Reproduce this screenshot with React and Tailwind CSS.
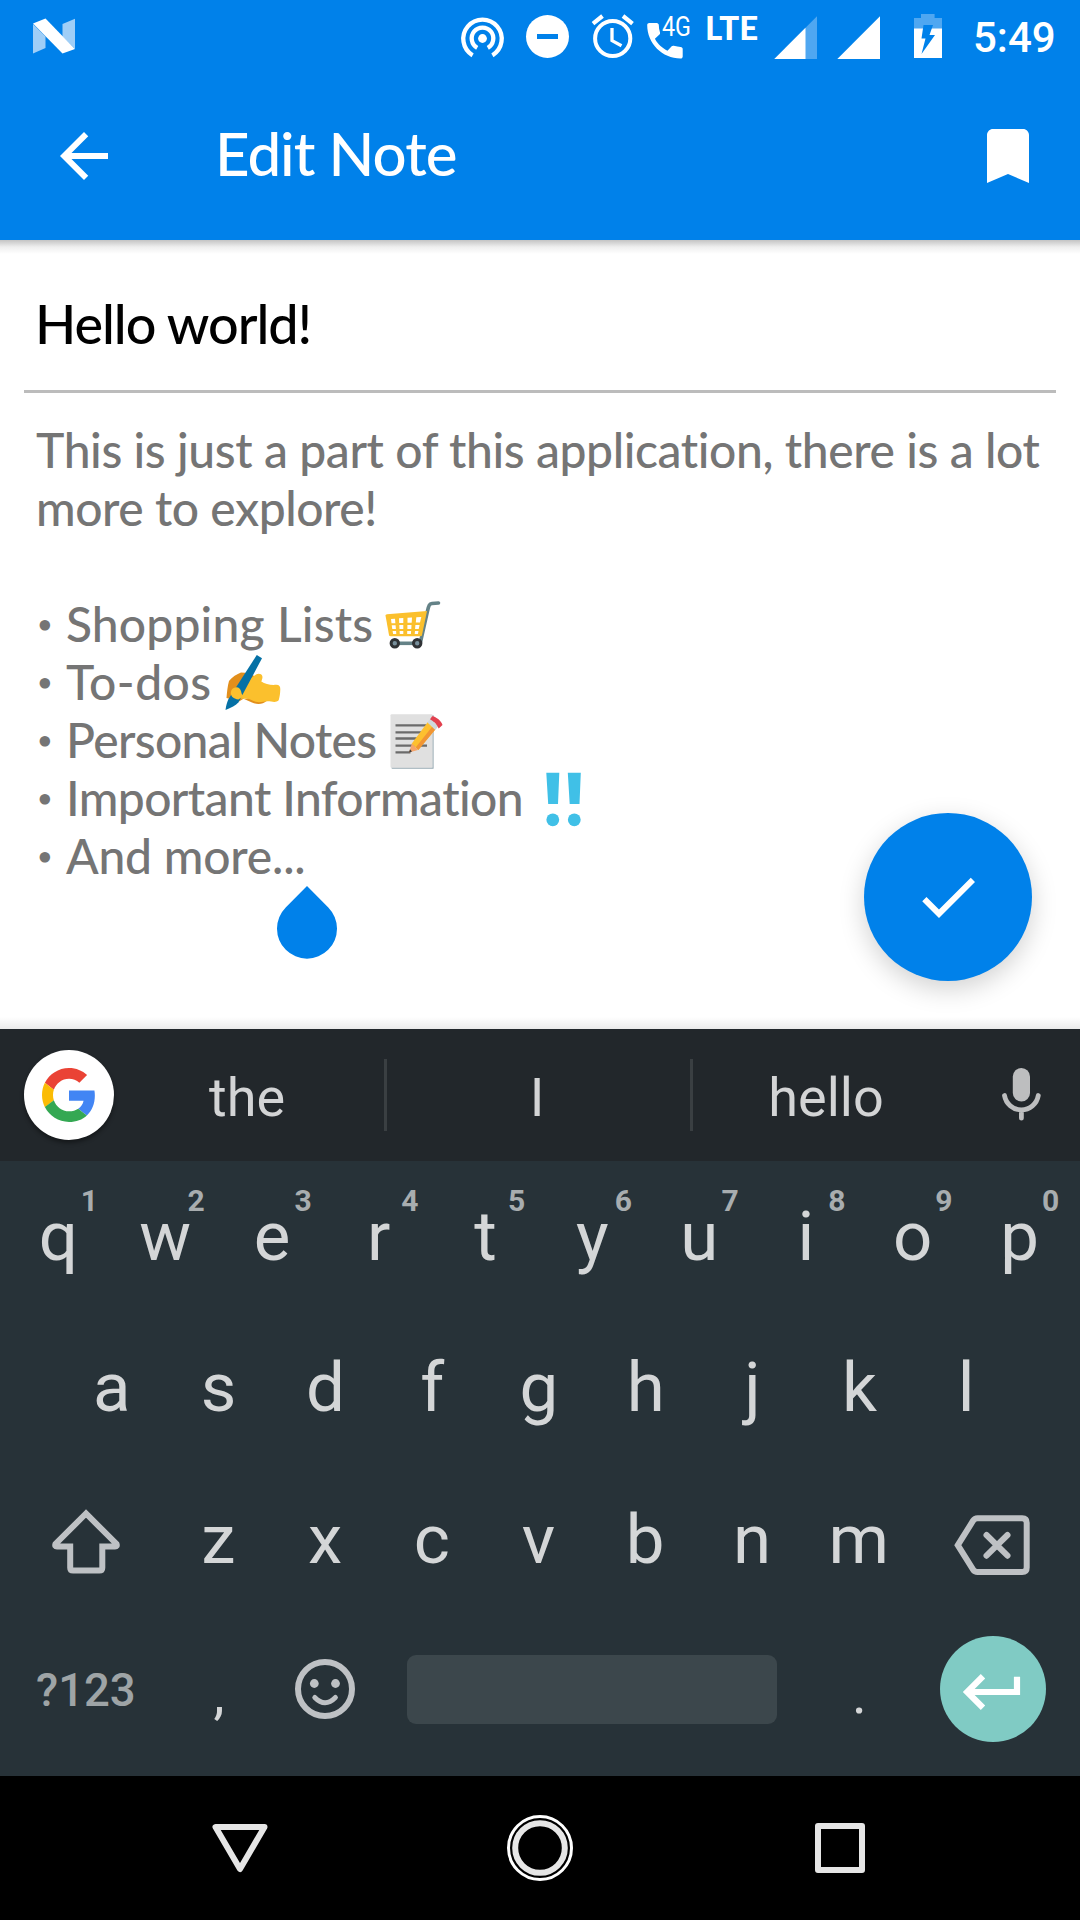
const roboto = "font-['Roboto',sans-serif]";

function StatusBar() {
  return (
    <div className="flex h-[72px] items-start">
      <svg className="h-[72px] w-[108px]" viewBox="0 0 108 72">
        <path d="M33 24l12.5 12.5V48L33 53.5zM75 18.7v30L62.5 36.5V24z" fill="#9fcef7" />
        <path d="M33 23.5l12.5-5L75 49l-12.5 4.5z" fill="#fff" />
      </svg>
      <div className="ml-auto flex">
        <svg className="h-[72px] w-[62px]" viewBox="455 0 62 72" fill="none" stroke="#fff" strokeWidth="4.3">
          <path d="M472.6 55.3A19.2 19.2 0 1 1 492.4 55.3" />
          <path d="M477.2 47.8A10.8 10.8 0 1 1 487.8 47.8" />
          <circle cx="482.5" cy="38.5" r="4.4" fill="#fff" stroke="none" />
        </svg>
        <svg className="h-[72px] w-[63px]" viewBox="517 0 63 72">
          <circle cx="547.5" cy="36.5" r="21.5" fill="#fff" />
          <path d="M537 34h21v5h-21z" fill="#0081ea" />
        </svg>
        <svg className="h-[72px] w-[64px]" viewBox="580 0 64 72" fill="none" stroke="#fff">
          <circle cx="612.7" cy="38.5" r="17.6" strokeWidth="4" />
          <path d="M612 28v12.6l9.5 5.2" strokeWidth="3.3" />
          <path d="M593 23.6l9.5-7.6M632.500 23.6l-9.500-7.600" strokeWidth="4.2" />
        </svg>
        <svg className="h-[72px] w-[58px]" viewBox="644 0 58 72" fill="#fff">
          <path d="M649.300 23h7.400c1.200 0 2.100 1 2.100 2.100 0 2.500.4 5 1.200 7.300.2.700.1 1.500-.5 2.100l-4.600 4.300c3.300 6 7.500 9.300 12.600 11.900l4.200-4.400c.6-.6 1.400-.7 2.100-.5 2.400.7 4.800 1.100 6.900 1.200 1.200 0 2 1 2 2.100v7.400c0 1.200-.900 2.100-2.100 2.100-18.400 0-33.400-15-33.400-33.500 0-1.200.9-2.100 2.100-2.100z" />
          <text x="662" y="36" fontFamily="Roboto" fontSize="27" fontWeight="400" textLength="29" lengthAdjust="spacingAndGlyphs">4G</text>
        </svg>
        <span className="mt-[11px] w-[70px] pl-[3px] font-['Lato',sans-serif] text-[33px] leading-[32px] font-black text-white">LTE</span>
        <svg className="h-[72px] w-[58px]" viewBox="772 0 58 72">
          <path d="M774.300 59L817 16.300V59z" fill="#4fa7f1" />
          <path d="M774.300 59l31.200-31.200V59z" fill="#fff" />
        </svg>
        <svg className="h-[72px] w-[70px]" viewBox="830 0 70 72">
          <path d="M837.300 59L880 16.300V59z" fill="#fff" />
        </svg>
        <svg className="h-[72px] w-[73px]" viewBox="900 0 73 72">
          <path d="M914 18h7v-4h13.600v4h7.400v11h-28z" fill="#4fa7f1" />
          <path d="M914 28.500h28V58h-28z" fill="#fff" />
          <path d="M923.500 25h9.500l-3.500 10h5.500l-13.500 19 4-15.500h-4z" fill="#0081ea" />
        </svg>
        <span className={`${roboto} mt-[13px] mr-[24px] w-[83px] text-[42px] leading-[50px] font-medium text-white`}>5:49</span>
      </div>
    </div>
  );
}

function Toolbar() {
  return (
    <div className="flex h-[168px] items-center pr-[36px] pl-[48px]">
      <svg className="size-[72px]" viewBox="0 0 24 24" fill="#fff">
        <path d="M20 11H7.830l5.590-5.590L12 4l-8 8 8 8 1.410-1.410L7.830 13H20v-2z" />
      </svg>
      <h1 className="mb-[6px] ml-[95px] flex-1 font-['Lato',sans-serif] text-[60px] leading-[60px] font-medium tracking-[-1.000px] text-white [font-variant-ligatures:none]">Edit Note</h1>
      <svg className="size-[72px]" viewBox="0 0 24 24" fill="#fff">
        <path d="M17 3H7c-1.100 0-2 .9-2 2v16l7-3 7 3V5c0-1.100-.9-2-2-2z" />
      </svg>
    </div>
  );
}

function CartEmoji() {
  return (
    <svg className="mb-[4px] h-[58px] w-[58px] overflow-visible" viewBox="384 593 58 58" role="img" aria-label="Shopping cart">
      <path d="M438.500 603l-6.500.5c-2.500.3-3.200 1.500-4.500 7.500l-7 31" fill="none" stroke="#648287" strokeWidth="3.600" strokeLinecap="round" />
      <path d="M395 643.300h22" stroke="#648287" strokeWidth="3.600" />
      <path d="M385.500 615.500c0-.8.500-1.200 1.500-1.300L427 611l-5 24c-.2.800-.6 1.200-1.500 1.200H390.500c-.9 0-1.300-.4-1.500-1.200z" fill="#fbc02d" />
      <path d="M391 619l4-.3.400 4.600h-3.900zM399 618.300l4.300-.2v5h-4.100zM407.500 617.800l4.500-.3-.3 5.300h-4.200zM416.300 617.300l5-.4-1.300 5.700h-4.200zM391.700 625.200h3.900l.3 3.800h-3.600zM399.300 625h4v4h-3.800zM407.400 625h4.100l-.2 4h-3.900zM415.400 625h4.200l-.9 4h-3.600zM392.600 631h3.500l.2 3h-3.200zM399.600 631h3.700v3h-3.500zM407.200 631h3.900l-.2 3h-3.700zM415 631h3.500l-.6 3h-3.200z" fill="#fff" />
      <g fill="#78909c" stroke="#303336" strokeWidth="3">
        <circle cx="394.800" cy="643.300" r="3.700" />
        <circle cx="417.200" cy="643.300" r="3.700" />
      </g>
    </svg>
  );
}

function WritingHandEmoji() {
  return (
    <svg className="mb-[4px] h-[58px] w-[58px] overflow-visible" viewBox="224 651 58 58" role="img" aria-label="Writing hand">
      <path d="M241 672.500c-4 1.500-9 4.500-12 8.500-1.500 5-2 11-2.500 17 4 1 9 2.500 12.500 3.500l8-5 8-20-6-3.500z" fill="#e28f1c" />
      <path d="M244 699l8 3.500c5 2.500 11 2 14.500-1.500l-8-5z" fill="#e28f1c" />
      <path d="M240 686l16-11.500c2.500-1.500 5.500-1 6.300 1.500.5 2-.3 3.500-1 5.500 4 2.800 9.500 3.800 15 3.300 3 0 4 1.500 4 4.500-.1 4-.6 7.500-1.600 11-3 3-7 1-11 1-4 .2-8 1.500-12 .5-3-.8-5.500-3-9-3.300-4.500.3-8.500.5-12-1.200-4-2-4-6-.7-7.300z" fill="#fbc02d" />
      <path d="M256.800 655l5.200 3.200-23.500 44c-2.500 3-7.500 5.500-13 7.800.5-4 1.500-8 3-11z" fill="#0571a6" />
      <path d="M231.500 690c2-3 6-3.500 8-1.500 2.500 2.500 1 5 4 7.500l-5 3.500c-5-.5-9.500-4-7-9.500z" fill="#fbc02d" />
    </svg>
  );
}

function MemoEmoji() {
  return (
    <svg className="mb-[4px] h-[58px] w-[58px] overflow-visible" viewBox="388 709 58 58" role="img" aria-label="Memo">
      <rect x="391.500" y="715" width="42.300" height="54" rx="1" fill="#b0bec5" />
      <rect x="390.500" y="714.200" width="42" height="53.600" rx="1" fill="#e0e0e0" />
      <path d="M395.500 725.300H427M395.500 732.300H427M395.500 738.500H427M395.500 745.700H427M395.500 752.300h15" stroke="#6b6b6b" strokeWidth="2.300" />
      <path d="M409 752.500l3-9.500 6 7z" fill="#f5a46b" />
      <path d="M409 752.500l1-3.200 2 2.300z" fill="#3c3c3c" />
      <path d="M411.800 743.500l16-21.500 7.500 7.500-17 20.500z" fill="#fdc02f" />
      <path d="M415.800 747.200l16.500-20.800 3 3-17 20.600z" fill="#f19534" />
      <path d="M427.500 722.500l2.800-3.700 8 7.500-3 3.700z" fill="#cfd8dc" />
      <path d="M430 719.200l2-2.800c2-1.500 10 4.800 10.500 8.500l-3.800 3.600c-1.500-4-5-7.500-8.700-9.300z" fill="#e2404e" />
    </svg>
  );
}

function BangEmoji() {
  return (
    <svg className="mb-[4px] h-[58px] w-[58px] overflow-visible" viewBox="540 767 58 58" role="img" aria-label="Double exclamation mark" fill="#40c0e7">
      <path d="M546.300 772.700h13L558 804h-9.800zM567.800 772.700h13L579.500 804h-9.800z" />
      <circle cx="552.800" cy="819.800" r="6.400" />
      <circle cx="574.300" cy="819.800" r="6.400" />
    </svg>
  );
}

function Bullet({ children }) {
  return (
    <li className="flex h-[58px] items-center whitespace-nowrap">
      <span className="w-[29px] text-[27px]">•</span>
      {children}
    </li>
  );
}

function Editor() {
  return (
    <main className="relative h-[789px] overflow-hidden bg-white font-['Lato',sans-serif] font-medium [font-variant-ligatures:none]">
      <div className="absolute inset-x-0 top-0 h-[14px] bg-gradient-to-b from-[#c4c4c4] via-[#efefef] to-white" />
      <div className="mx-[24px] flex h-[153px] items-center border-b-[3px] border-[#bcbcbc] pt-[17px] pl-[11px] text-[54px] tracking-[-1.050px] text-black">Hello world!</div>
      <div className="pt-[28px] pl-[36px] text-[48px] leading-[58px] text-[#757575]">
        <p className="whitespace-nowrap">
          <span className="tracking-[-0.400px]">This is just a part of this application, there is a lot</span>
          <br />
          <span className="tracking-[-0.450px]">more to explore!</span>
        </p>
        <ul className="mt-[58px] pl-px">
          <Bullet><span className="w-[318px] tracking-[0.150px]">Shopping Lists</span><CartEmoji /></Bullet>
          <Bullet><span className="w-[158px] tracking-[0.450px]">To-dos</span><WritingHandEmoji /></Bullet>
          <Bullet><span className="w-[322px] tracking-[-0.650px]">Personal Notes</span><MemoEmoji /></Bullet>
          <Bullet><span className="w-[474px] tracking-[-0.600px]">Important Information</span><BangEmoji /></Bullet>
          <Bullet><span className="tracking-[-0.200px]">And more...</span></Bullet>
        </ul>
      </div>
      <svg className="absolute top-[646px] left-[276px] h-[73px] w-[62px]" viewBox="276 886 62 73">
        <path d="M307 886l21.300 21.500a30 30 0 1 1-42.600 0z" fill="#0081ea" />
      </svg>
      <button className="absolute top-[573px] right-[48px] flex size-[168px] items-center justify-center rounded-full bg-[#0081ea] shadow-[0_8px_26px_rgba(0,0,0,0.18)]">
        <svg className="size-[72px]" viewBox="0 0 24 24" fill="#fff">
          <path d="M9 16.170L4.830 12l-1.420 1.410L9 19 21 7l-1.410-1.410z" />
        </svg>
      </button>
      <div className="absolute inset-x-0 bottom-0 h-[12px] bg-gradient-to-t from-black/8 to-transparent" />
    </main>
  );
}

function SuggestionBar() {
  return (
    <div className="flex h-[132px] items-center bg-[#22272b] text-[54px] text-[#d3d4d5]">
      <div className="ml-[24px] flex size-[90px] items-center justify-center rounded-full bg-white shadow-[0_3px_4px_rgba(0,0,0,0.4)]">
        <svg className="size-[54px]" viewBox="0 0 48 48">
          <path fill="#EA4335" d="M24 9.500c3.540 0 6.710 1.220 9.210 3.600l6.850-6.850C35.900 2.380 30.470 0 24 0 14.620 0 6.510 5.380 2.560 13.220l7.980 6.190C12.430 13.720 17.740 9.500 24 9.500z" />
          <path fill="#4285F4" d="M46.980 24.550c0-1.570-.15-3.090-.38-4.550H24v9.020h12.940c-.58 2.960-2.260 5.480-4.780 7.180l7.730 6c4.510-4.180 7.090-10.360 7.090-17.650z" />
          <path fill="#FBBC05" d="M10.530 28.590c-.48-1.450-.76-2.990-.76-4.590s.27-3.140.76-4.590l-7.980-6.190C.92 16.460 0 20.120 0 24c0 3.880.92 7.540 2.560 10.780l7.970-6.190z" />
          <path fill="#34A853" d="M24 48c6.480 0 11.930-2.130 15.890-5.810l-7.730-6c-2.150 1.450-4.920 2.300-8.160 2.300-6.260 0-11.570-4.220-13.470-9.910l-7.980 6.190C6.510 42.620 14.620 48 24 48z" />
        </svg>
      </div>
      <span className="w-[270px] pt-[5px] pr-[4px] text-center">the</span>
      <span className="h-[72px] w-[3px] bg-[#3a3f42]" />
      <span className="w-[303px] pt-[5px] pr-[3px] text-center">I</span>
      <span className="h-[72px] w-[3px] bg-[#3a3f42]" />
      <span className="w-[266px] pt-[5px] text-center">hello</span>
      <svg className="h-[132px] w-[121px]" viewBox="959 1029 121 132" fill="none" stroke="#bdbebf" strokeWidth="4.800" strokeLinecap="round">
        <rect x="1012.800" y="1068" width="17.200" height="33.500" rx="8.600" fill="#bdbebf" stroke="none" />
        <path d="M1004.500 1095.500c1.500 8.500 8.500 14.300 16.900 14.300s15.400-5.800 16.900-14.300M1021.400 1110v8.200" />
      </svg>
    </div>
  );
}

function Key({ label, hint }) {
  return (
    <div className="relative flex flex-1 items-center justify-center">
      {label}
      {hint && <span className="absolute top-[22px] left-1/2 w-[62px] text-center text-[30px] leading-[36px] font-bold text-[#a8adaf]">{hint}</span>}
    </div>
  );
}

function Keyboard() {
  return (
    <div className={`${roboto} h-[747px] bg-[#273238]`}>
      <SuggestionBar />
      <div className="pr-[7px] pl-[5px] text-[69px] leading-none text-[#d4d6d7]">
        <div className="flex h-[150px]">
          {[..."qwertyuiop"].map((c, i) => <Key key={c} label={c} hint={"1234567890"[i]} />)}
        </div>
        <div className="flex h-[153px] px-[53.400px]">
          {[..."asdfghjkl"].map((c) => <Key key={c} label={c} />)}
        </div>
        <div className="flex h-[152px]">
          <svg className="w-[160px]" viewBox="5 1464 160 152" fill="none" stroke="#bec1c4" strokeWidth="6">
            <path d="M86 1513.500l-30.500 30.500q-1 2.400 1.500 2.400h13.200v21.300q0 2.900 2.900 2.900h26.300q2.900 0 2.900-2.900v-21.300H115q2.500 0 1.500-2.400z" />
          </svg>
          <div className="-mt-[2px] flex flex-1">
            {[..."zxcvbnm"].map((c) => <Key key={c} label={c} />)}
          </div>
          <svg className="w-[161px]" viewBox="912 1464 161 152" fill="none" stroke="#bec1c4" strokeWidth="6" strokeLinecap="round">
            <path d="M957.800 1545.200l15.300-24.500q1.500-2.400 4.500-2.400h44.600q4.500 0 4.500 4.500v44.700q0 4.500-4.500 4.500h-44.600q-3 0-4.500-2.400z" />
            <path d="M986.500 1535l21 20.700M1007.500 1535l-21 20.700" />
          </svg>
        </div>
        <div className="flex h-[146px] items-center">
          <span className="w-[160px] pt-[3px] pl-[31px] text-[45.500px] font-medium text-[#9ea4a6]">?123</span>
          <span className="w-[107px] pt-[9px] pl-px text-center text-[56px]">,</span>
          <svg className="h-[146px] w-[106px]" viewBox="272 1616 106 146" fill="none" stroke="#bec1c4" strokeLinecap="round">
            <circle cx="325" cy="1689" r="27" strokeWidth="6" />
            <circle cx="314.300" cy="1683.500" r="4.400" fill="#bec1c4" stroke="none" />
            <circle cx="335.500" cy="1683.500" r="4.400" fill="#bec1c4" stroke="none" />
            <path d="M314.800 1697.500q10.200 10.500 20.600 0" strokeWidth="5" />
          </svg>
          <span className="ml-[29px] h-[69px] w-[370px] rounded-[9px] bg-[#3c474c]" />
          <span className="ml-[29px] w-[106px] pt-[9px] pl-px text-center text-[56px]">.</span>
          <span className="ml-[28px] flex size-[106px] items-center justify-center rounded-full bg-[#80cbc4]">
            <svg className="size-[106px]" viewBox="940 1636 106 106" fill="none" stroke="#fff" strokeWidth="6.200">
              <path d="M983 1676.200L967.200 1692l15.800 15.800M967.500 1692H1017v-15.200" />
            </svg>
          </span>
        </div>
      </div>
    </div>
  );
}

function NavBar() {
  return (
    <div className="flex h-[144px] items-center justify-center gap-[172px] bg-black">
      <svg className="h-[144px] w-[128px]" viewBox="176 1776 128 144" fill="none" stroke="#e6e6e6" strokeWidth="6" strokeLinejoin="round">
        <path d="M215.500 1827h49L240 1869z" />
      </svg>
      <svg className="h-[144px] w-[128px]" viewBox="476 1776 128 144" fill="none">
        <circle cx="540" cy="1848" r="31.500" stroke="#fff" strokeWidth="3" />
        <circle cx="540" cy="1848" r="24.800" stroke="#e6e6e6" strokeWidth="6" />
      </svg>
      <svg className="h-[144px] w-[128px]" viewBox="776 1776 128 144" fill="none" stroke="#e6e6e6" strokeWidth="6" strokeLinejoin="round">
        <path d="M818 1826h44v44h-44z" />
      </svg>
    </div>
  );
}

export default function App() {
  return (
    <div className="flex h-[1920px] w-[1080px] flex-col overflow-hidden bg-white">
      <header className="h-[240px] bg-[#0081ea]">
        <StatusBar />
        <Toolbar />
      </header>
      <Editor />
      <Keyboard />
      <NavBar />
    </div>
  );
}
